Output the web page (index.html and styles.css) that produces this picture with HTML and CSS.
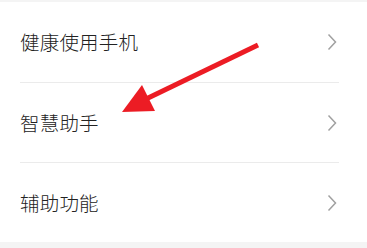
FILE: index.html
```html
<!DOCTYPE html>
<html lang="zh-CN">
<head>
<meta charset="utf-8">
<link rel="stylesheet" href="styles.css">
</head>
<body>
<div class="screen">
  <div class="gap-top"></div>
  <ul class="list">
    <li class="row"><span class="label">健康使用手机</span><svg class="chev" viewBox="0 0 10 18" width="10" height="18"><path d="M1.5 1.5 L8.5 9 L1.5 16.5" fill="none" stroke="#a0a0a0" stroke-width="1.5"/></svg></li>
    <li class="row"><span class="label">智慧助手</span><svg class="chev" viewBox="0 0 10 18" width="10" height="18"><path d="M1.5 1.5 L8.5 9 L1.5 16.5" fill="none" stroke="#a0a0a0" stroke-width="1.5"/></svg></li>
    <li class="row"><span class="label">辅助功能</span><svg class="chev" viewBox="0 0 10 18" width="10" height="18"><path d="M1.5 1.5 L8.5 9 L1.5 16.5" fill="none" stroke="#a0a0a0" stroke-width="1.5"/></svg></li>
  </ul>
  <svg class="arrow" viewBox="0 0 367 248" width="367" height="248">
    <line x1="258" y1="45" x2="146" y2="99" stroke="#ec1c24" stroke-width="5"/>
    <polygon points="142,85 122,112 155,111" fill="#ec1c24"/>
  </svg>
</div>
</body>
</html>
```

FILE: styles.css
```css
html, body {
  margin: 0;
  padding: 0;
  background: #f4f4f4;
}
.screen {
  position: relative;
  width: 367px;
  height: 248px;
  overflow: hidden;
  font-family: "Noto Sans CJK SC", "Noto Sans", sans-serif;
}
.gap-top {
  height: 2px;
}
.list {
  list-style: none;
  margin: 0;
  padding: 0;
  background: #fff;
}
.row {
  height: 80px;
  margin: 0 28px 0 20px;
  display: flex;
  align-items: center;
  justify-content: space-between;
  box-sizing: border-box;
}
.row + .row {
  border-top: 1px solid #ebebeb;
}
.label {
  font-size: 19.5px;
  font-weight: 300;
  color: #222;
  line-height: 1;
  letter-spacing: 0.2px;
}
.chev {
  display: block;
  margin-right: 2px;
}
.arrow {
  position: absolute;
  left: 0;
  top: 0;
  pointer-events: none;
}
```
